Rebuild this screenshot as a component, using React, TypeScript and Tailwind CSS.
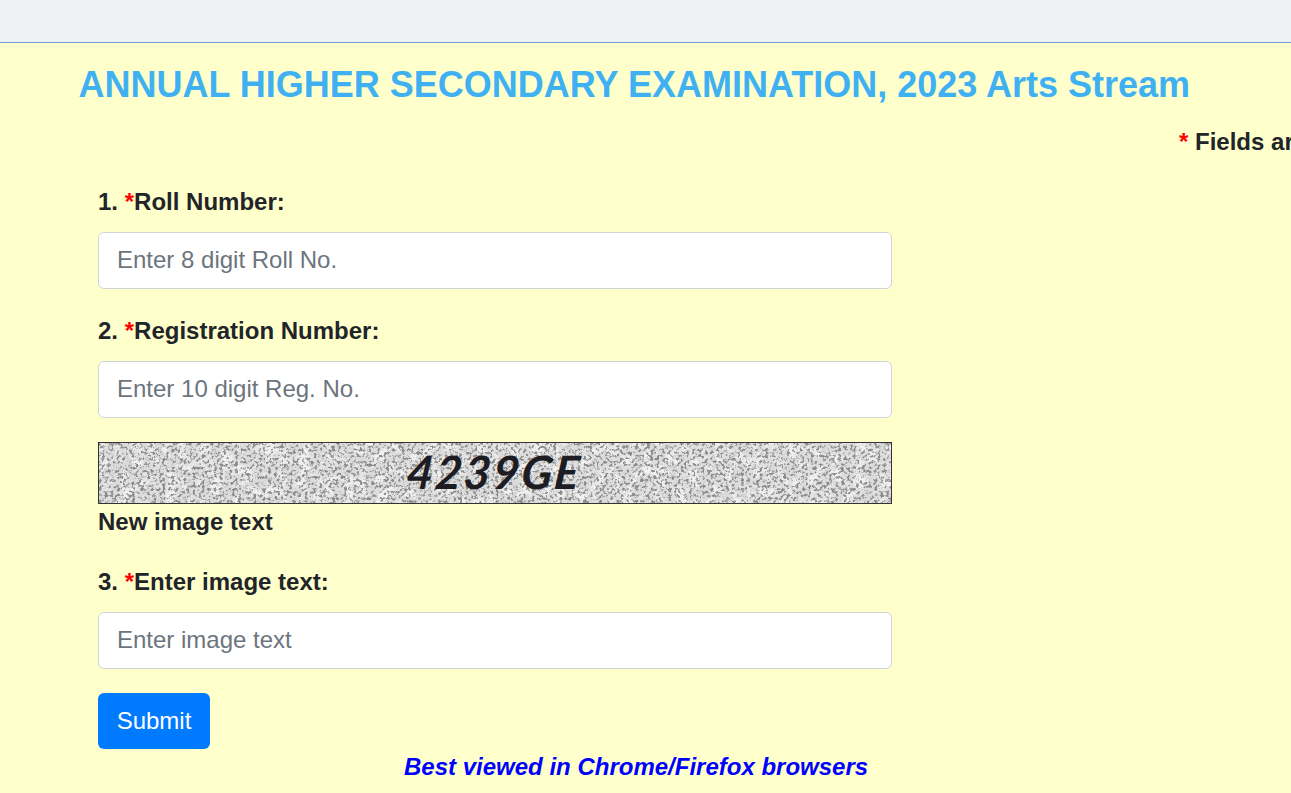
const font = "font-['Liberation_Sans',Arial,sans-serif]";

function Field({ n, label, placeholder }: { n: number; label: string; placeholder: string }) {
  return (
    <div className="flex flex-col">
      <label className="text-[24px] leading-[34px] font-bold text-[#212529] mb-[13px]">
        {n}. <span className="text-[#ff0000]">*</span>
        {label}
      </label>
      <input
        placeholder={placeholder}
        className="w-[794px] h-[57px] px-[18px] pb-[2px] bg-white border border-[#ced4da] rounded-[6px] text-[24px] text-[#495057] placeholder:text-[#6c757d] outline-none"
      />
    </div>
  );
}

function Captcha() {
  return (
    <div className="relative w-[794px] h-[62px] border border-[#333] overflow-hidden bg-[#e4e4e4]">
      <svg className="absolute inset-0 w-full h-full" aria-hidden="true">
        <filter id="noise" x="0" y="0" width="100%" height="100%">
          <feTurbulence type="fractalNoise" baseFrequency="0.33" numOctaves="3" seed="11" />
          <feColorMatrix type="matrix" values="0 0 0 0 0.2  0 0 0 0 0.2  0 0 0 0 0.2  4 4 0 0 -4" />
          <feGaussianBlur stdDeviation="0.35" />
        </filter>
        <filter id="clouds" x="0" y="0" width="100%" height="100%">
          <feTurbulence type="fractalNoise" baseFrequency="0.09" numOctaves="2" seed="4" />
          <feColorMatrix type="matrix" values="0 0 0 0 1  0 0 0 0 1  0 0 0 0 1  3 3 0 0 -2.8" />
        </filter>
        <rect width="100%" height="100%" fill="#dcdcdc" />
        <rect width="100%" height="100%" filter="url(#clouds)" opacity="0.6" />
        <rect width="100%" height="100%" filter="url(#noise)" opacity="0.85" />
      </svg>
      <span className="absolute left-[308px] top-[4px] text-[46px] leading-[50px] tracking-[2px] text-[#1c1c22] font-['Lato',sans-serif] italic -skew-x-6 font-bold">
        4239GE
      </span>
    </div>
  );
}

export default function App() {
  return (
    <div className={`${font} w-[1291px] h-[793px] overflow-hidden bg-[#ffffcc] flex flex-col`}>
      <div className="h-[43px] shrink-0 bg-[#f0f1f2] border-b border-[#6f9fd8]" />
      <h2 className="mt-[21px] ml-[78.5px] text-[36px] leading-[42px] font-bold text-[#3fb1f2] whitespace-nowrap">
        ANNUAL HIGHER SECONDARY EXAMINATION, 2023 Arts Stream
      </h2>
      <div className="mt-[19px] pl-[1179px] text-[24px] leading-[34px] font-bold text-[#212529] whitespace-nowrap">
        <span className="text-[#ff0000]">*</span> Fields are mandatory
      </div>
      <div className="ml-[98px] mt-[26px] flex flex-col">
        <Field n={1} label="Roll Number:" placeholder="Enter 8 digit Roll No." />
        <div className="mt-[25px]">
          <Field n={2} label="Registration Number:" placeholder="Enter 10 digit Reg. No." />
        </div>
        <div className="mt-[24px]">
          <Captcha />
        </div>
        <div className="text-[24px] leading-[34px] font-bold text-[#212529] mt-[1px]">New image text</div>
        <div className="mt-[26px]">
          <Field n={3} label="Enter image text:" placeholder="Enter image text" />
        </div>
        <button className="mt-[24px] w-[112px] h-[56px] rounded-[6px] bg-[#007bff] text-white text-[24px]">Submit</button>
      </div>
      <div className="mt-[1px] pl-[404px] text-[24px] leading-[34px] font-bold italic text-[#0000ff] whitespace-nowrap">
        Best viewed in Chrome/Firefox browsers
      </div>
    </div>
  );
}
